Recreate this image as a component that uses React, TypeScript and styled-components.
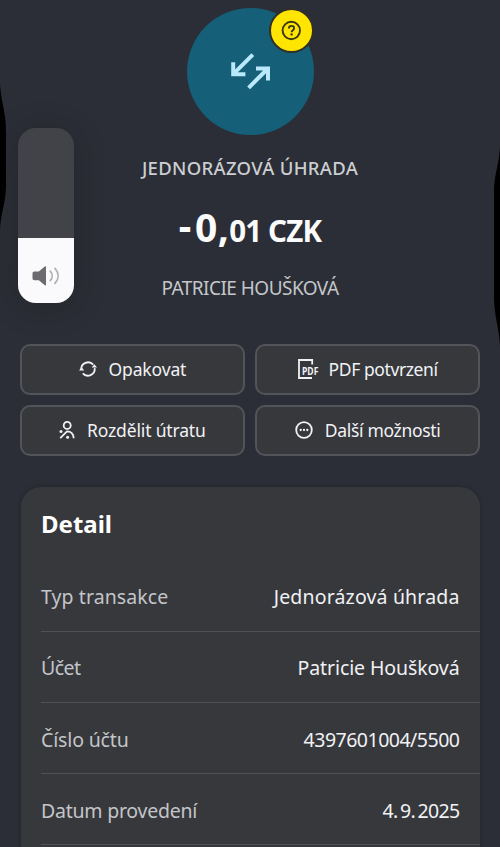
import React from 'react';
import styled, { createGlobalStyle } from 'styled-components';

const GlobalStyle = createGlobalStyle`
  * { box-sizing: border-box; }
  html, body { margin: 0; background: #2b2e36; }
  body { font-family: "Noto Sans", "Open Sans", sans-serif; overflow: hidden; }
`;

const Screen = styled.main`
  position: relative;
  width: 500px;
  height: 847px;
  overflow: hidden;
  background: #2b2e36;
  display: flex;
  flex-direction: column;
`;

const Hero = styled.header`
  flex: none;
  height: 344px;
  padding-top: 8px;
  display: flex;
  flex-direction: column;
  align-items: center;
`;

const Avatar = styled.div`
  position: relative;
  width: 127px;
  height: 127px;
  border-radius: 50%;
  background: #155f79;
  flex: none;
`;

const AvatarIcon = styled.svg`
  display: block;
  width: 127px;
  height: 127px;
`;

const Badge = styled.div`
  position: absolute;
  left: 82px;
  top: 0;
  width: 45px;
  height: 45px;
  border: 2px solid #2f3027;
  border-radius: 50%;
  background: #ffe500;
`;

const BadgeIcon = styled.svg`
  display: block;
  width: 41px;
  height: 41px;
`;

const Text = styled.span<{ $track?: number }>`
  letter-spacing: ${(p) => p.$track ?? 0}px;
  white-space: pre;
`;

const TransactionType = styled.h2`
  margin: 19px 0 0;
  height: 27px;
  font-size: 18.5px;
  line-height: 27px;
  font-weight: 500;
  color: #ccced2;
`;

const Amount = styled.div`
  margin-top: 22px;
  height: 48px;
  display: flex;
  align-items: baseline;
  color: #fbfbfc;
  font-weight: 700;
`;

const Whole = styled(Text)`
  font-size: 39px;
  line-height: 48px;
`;

const Fraction = styled(Text)`
  font-size: 29.5px;
`;

const Sign = styled.span`
  display: inline-block;
  line-height: 1;
  letter-spacing: 3.6px;
  transform: translateY(-2px);
`;

const Payee = styled.p`
  margin: 23px 0 0;
  height: 28px;
  font-size: 19px;
  line-height: 28px;
  color: #c4c6ca;
`;

const Actions = styled.section`
  flex: none;
  display: grid;
  grid-template-columns: 1fr 1fr;
  grid-auto-rows: 50.5px;
  gap: 10.5px;
  padding: 0 20px;
`;

const ActionButton = styled.button`
  display: flex;
  align-items: center;
  justify-content: center;
  gap: 12px;
  padding: 0 0 1px;
  border: 2.5px solid #525459;
  border-radius: 10px;
  background: #37383c;
  color: #f1f2f5;
  font: 400 17.5px/26px "Noto Sans", sans-serif;
`;

const ActionIcon = styled.svg<{ $after?: number }>`
  flex: none;
  margin-right: ${(p) => p.$after ?? 0}px;
  overflow: visible;
  fill: none;
  stroke: #f1f2f5;
  stroke-width: 1.8;
`;

const PdfMark = styled.text`
  font: 700 11px "Noto Sans", sans-serif;
  fill: #f1f2f5;
  stroke: none;
`;

const Card = styled.section`
  margin: 31.5px 20px 0 21px;
  height: 400px;
  flex: none;
  padding-left: 20px;
  border-radius: 20px 20px 0 0;
  background: #37383c;
  box-shadow: 0 0 4px rgba(20, 20, 28, 0.35);
`;

const CardTitle = styled.h3`
  margin: 0;
  height: 73.6px;
  padding-top: 20px;
  font-size: 24px;
  line-height: 34px;
  font-weight: 700;
  color: #fff;
`;

const Row = styled.div`
  height: 71.2px;
  padding: 3px 20.5px 0 0;
  display: flex;
  align-items: center;
  justify-content: space-between;
  border-bottom: 1px solid #505156;
  font-size: 19.5px;
  line-height: 28px;
`;

const Label = styled(Text)`
  color: #c3c5c9;
`;

const Value = styled(Text)<{ $word?: number }>`
  color: #f0f1f4;
  word-spacing: ${(p) => p.$word ?? 0}px;
`;

const Volume = styled.aside`
  position: absolute;
  left: 18px;
  top: 128px;
  width: 56px;
  height: 175px;
  border-radius: 18px;
  overflow: hidden;
  background: #424348;
  display: flex;
  flex-direction: column;
  justify-content: flex-end;
`;

const VolumeShadow = styled.div`
  position: absolute;
  left: 18px;
  top: 128px;
  width: 56px;
  height: 175px;
  border-radius: 18px;
  box-shadow: 0 4px 30px rgba(20, 21, 26, 0.28);
`;

const VolumeLevel = styled.div`
  height: 65.5px;
  background: #fafafd;
`;

const VolumeIcon = styled.svg`
  display: block;
  width: 56px;
  height: 65px;
`;

const Edge = styled.svg<{ $side: 'left' | 'right'; $top: number }>`
  position: absolute;
  top: ${(p) => p.$top}px;
  ${(p) => p.$side}: 0;
  width: 7px;
`;

const RepeatIcon = () => (
  <ActionIcon width="18" height="18" viewBox="0 0 18 18">
    <path d="M2.3 9.8A6.8 6.8 0 0 1 14.2 4.7M3.8 13.3A6.8 6.8 0 0 0 15.7 8.2" />
    <path d="M0 10.6L2.5 7.2l2.8 3.4zM12.7 7.6H18l-2.6-3.4z" fill="#f1f2f5" stroke="none" />
  </ActionIcon>
);

const PdfIcon = () => (
  <ActionIcon $after={-2} width="21" height="20" viewBox="0 0 21 20">
    <path d="M14 19H1V1h13.2v4.6" />
    <PdfMark x="4" y="15.5" textLength="16.4" lengthAdjust="spacingAndGlyphs">PDF</PdfMark>
  </ActionIcon>
);

const SplitIcon = () => (
  <ActionIcon width="16" height="18" viewBox="0 0 16 18">
    <circle cx="8.2" cy="4.4" r="3.5" />
    <path d="M1.2 17.2L8 10.4c3.9 0 6.4 2.7 6.7 6.8" />
    <g fill="#f1f2f5" stroke="none">
      <circle cx="2" cy="10.4" r="1.5" />
      <circle cx="8.6" cy="16.2" r="1.5" />
    </g>
  </ActionIcon>
);

const MoreIcon = () => (
  <ActionIcon width="18" height="18" viewBox="0 0 18 18">
    <circle cx="9" cy="9" r="7.8" />
    <g fill="#f1f2f5" stroke="none">
      <circle cx="5.7" cy="9" r="1.15" />
      <circle cx="9" cy="9" r="1.15" />
      <circle cx="12.3" cy="9" r="1.15" />
    </g>
  </ActionIcon>
);

const actions = [
  { label: 'Opakovat', track: -0.14, Icon: RepeatIcon },
  { label: 'PDF potvrzení', track: -0.4, Icon: PdfIcon },
  { label: 'Rozdělit útratu', track: -0.16, Icon: SplitIcon },
  { label: 'Další možnosti', track: -0.32, Icon: MoreIcon },
];

const details = [
  { label: 'Typ transakce', lt: 0.08, value: 'Jednorázová úhrada', vt: 0.16 },
  { label: 'Účet', lt: -0.5, value: 'Patricie Houšková', vt: -0.1 },
  { label: 'Číslo účtu', lt: -0.15, value: '4397601004/5500', vt: -0.5 },
  { label: 'Datum provedení', lt: -0.24, value: '4. 9. 2025', vt: -0.65, word: -2 },
];

export default function App() {
  return (
    <Screen>
      <GlobalStyle />
      <VolumeShadow />
      <Hero>
        <Avatar>
          <AvatarIcon viewBox="0 0 127 127" fill="none" stroke="#b9e9fa" strokeWidth="4">
            <path d="M65.8 46.6L47 65.4M46.2 54.2v12h12.2" />
            <path d="M61.6 79.8L80.4 61M69 60.4h12v12" />
          </AvatarIcon>
          <Badge>
            <BadgeIcon viewBox="0 0 41 41" fill="none" stroke="#3a3812" strokeWidth="1.9">
              <circle cx="20.3" cy="20.5" r="8.7" />
              <path d="M17.9 18.4c0-1.6 1-2.5 2.6-2.5s2.6.9 2.6 2.3c0 2-2.5 1.9-2.5 4" />
              <circle cx="20.6" cy="24.4" r="1.2" fill="#3a3812" stroke="none" />
            </BadgeIcon>
          </Badge>
        </Avatar>
        <TransactionType>
          <Text $track={0.3}>JEDNORÁZOVÁ ÚHRADA</Text>
        </TransactionType>
        <Amount>
          <Whole $track={0.4}>
            <Sign>-</Sign>0,
          </Whole>
          <Fraction $track={-0.85}>01 CZK</Fraction>
        </Amount>
        <Payee>
          <Text $track={-0.53}>PATRICIE HOUŠKOVÁ</Text>
        </Payee>
      </Hero>
      <Actions>
        {actions.map(({ label, track, Icon }) => (
          <ActionButton key={label}>
            <Icon />
            <Text $track={track}>{label}</Text>
          </ActionButton>
        ))}
      </Actions>
      <Card>
        <CardTitle>
          <Text>Detail</Text>
        </CardTitle>
        {details.map((d) => (
          <Row key={d.label}>
            <Label $track={d.lt}>{d.label}</Label>
            <Value $track={d.vt} $word={d.word}>{d.value}</Value>
          </Row>
        ))}
      </Card>
      <Volume>
        <VolumeLevel>
          <VolumeIcon viewBox="0 0 56 65" fill="none">
            <path
              d="M16.5 33.5h4.3l6-5c.6-.5 1.2-.2 1.2.6v17.6c0 .8-.6 1.1-1.2.6l-6-5h-4.3c-1.3 0-2-.7-2-2v-4.8c0-1.3.7-2 2-2z"
              fill="#6c6c70"
            />
            <path d="M32.2 33.2c2.6 2.8 2.6 6.6 0 9.4" stroke="#b2b2b6" strokeWidth="1.8" strokeLinecap="round" />
            <path d="M37 30.4c4.2 4.6 4.2 10.4 0 15" stroke="#b2b2b6" strokeWidth="1.8" strokeLinecap="round" />
          </VolumeIcon>
        </VolumeLevel>
      </Volume>
      <Edge $side="left" $top={84} height="146" viewBox="0 0 7 146">
        <path d="M0 0C1.5 22 6 26 6 48V100C6 120 1.5 124 0 146z" fill="#000" />
      </Edge>
      <Edge $side="right" $top={147} height="198" viewBox="0 0 7 198">
        <path d="M7 0C5.5 22 1 26 1 48V148C1 170 5.5 176 7 198z" fill="#000" />
      </Edge>
    </Screen>
  );
}
